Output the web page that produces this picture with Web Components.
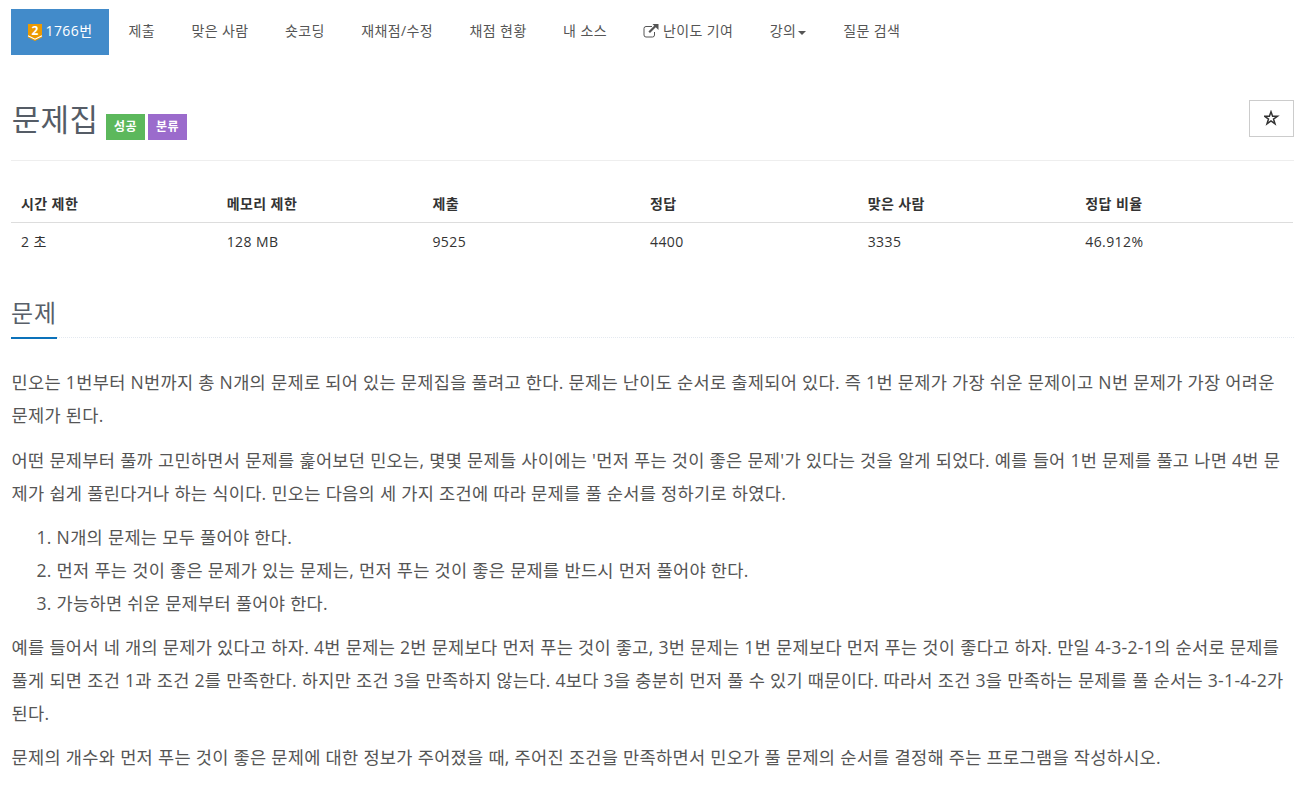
<!DOCTYPE html>
<html lang="ko">
<head>
<meta charset="utf-8">
<title>1766번: 문제집</title>
<style>
  body {
    margin: 0;
    padding: 9px 14px 0 11px;
    background: #fff;
    color: #333;
    font: 14px/20px "Open Sans", "Noto Sans CJK KR", sans-serif;
    letter-spacing: 0.4px;
  }
</style>
</head>
<body>
<problem-nav>
  <nav-item active><tier-badge level="2"></tier-badge> 1766번</nav-item>
  <nav-item>제출</nav-item>
  <nav-item>맞은 사람</nav-item>
  <nav-item>숏코딩</nav-item>
  <nav-item>재채점/수정</nav-item>
  <nav-item>채점 현황</nav-item>
  <nav-item>내 소스</nav-item>
  <nav-item><external-icon></external-icon> 난이도 기여</nav-item>
  <nav-item dropdown>강의</nav-item>
  <nav-item>질문 검색</nav-item>
</problem-nav>

<problem-header>
  문제집
  <problem-label slot="labels" kind="success">성공</problem-label>
  <problem-label slot="labels" kind="category">분류</problem-label>
</problem-header>

<problem-info></problem-info>

<problem-section heading="문제">
  <problem-text>민오는 1번부터 N번까지 총 N개의 문제로 되어 있는 문제집을 풀려고 한다. 문제는 난이도 순서로 출제되어 있다. 즉 1번 문제가 가장 쉬운 문제이고 N번 문제가 가장 어려운<br>문제가 된다.</problem-text>
  <problem-text>어떤 문제부터 풀까 고민하면서 문제를 훑어보던 민오는, 몇몇 문제들 사이에는 '먼저 푸는 것이 좋은 문제'가 있다는 것을 알게 되었다. 예를 들어 1번 문제를 풀고 나면 4번 문<br>제가 쉽게 풀린다거나 하는 식이다. 민오는 다음의 세 가지 조건에 따라 문제를 풀 순서를 정하기로 하였다.</problem-text>
  <condition-list></condition-list>
  <problem-text>예를 들어서 네 개의 문제가 있다고 하자. 4번 문제는 2번 문제보다 먼저 푸는 것이 좋고, 3번 문제는 1번 문제보다 먼저 푸는 것이 좋다고 하자. 만일 4-3-2-1의 순서로 문제를<br>풀게 되면 조건 1과 조건 2를 만족한다. 하지만 조건 3을 만족하지 않는다. 4보다 3을 충분히 먼저 풀 수 있기 때문이다. 따라서 조건 3을 만족하는 문제를 풀 순서는 3-1-4-2가<br>된다.</problem-text>
  <problem-text>문제의 개수와 먼저 푸는 것이 좋은 문제에 대한 정보가 주어졌을 때, 주어진 조건을 만족하면서 민오가 풀 문제의 순서를 결정해 주는 프로그램을 작성하시오.</problem-text>
</problem-section>

<script>
function define(name, html, setup) {
  customElements.define(name, class extends HTMLElement {
    constructor() {
      super();
      this.attachShadow({ mode: "open" }).innerHTML = html;
    }
    connectedCallback() {
      if (setup) setup(this, this.shadowRoot);
    }
  });
}

define("problem-nav", `
  <style>
    :host { display: flex; gap: 2.4px; height: 46px; }
  </style>
  <slot></slot>
`);

define("nav-item", `
  <style>
    :host {
      display: flex;
      align-items: center;
      box-sizing: border-box;
      height: 46px;
      padding: 0 17px 2px;
      color: #555;
      white-space: nowrap;
    }
    :host([active]) { padding-right: 16.6px; background: #428bca; color: #fff; }
    .caret {
      display: none;
      margin: 4px 1px 0 1.5px;
      border-top: 4px solid;
      border-left: 4.5px solid transparent;
      border-right: 4.5px solid transparent;
    }
    :host([dropdown]) .caret { display: block; }
  </style>
  <span><slot></slot></span><i class="caret"></i>
`);

define("tier-badge", `
  <style>
    :host { display: inline-block; width: 14px; height: 17px; margin-right: -0.5px; vertical-align: -5px; letter-spacing: 0; }
    svg { display: block; overflow: visible; }
    text { font: bold 12px "Open Sans", sans-serif; fill: #fff; text-anchor: middle; }
  </style>
  <svg width="14" height="17" viewBox="0 0 14 17">
    <path d="M0 0h14v13.5L7 17 0 13.5z" fill="#ec9a00"/>
    <path d="M0 11.8l7 3.4 7-3.4" fill="none" stroke="#fff" stroke-width="1.2"/>
    <text x="7" y="11"></text>
  </svg>
`, (el, root) => {
  root.querySelector("text").textContent = el.getAttribute("level");
});

define("external-icon", `
  <style>
    :host { display: inline-block; width: 16px; height: 14px; vertical-align: -2px; margin-right: -0.5px; }
    svg { display: block; }
  </style>
  <svg width="16" height="14" viewBox="0 0 16 14" fill="none" stroke="#555">
    <path d="M9 2.5H3Q1 2.5 1 4.5v6.5q0 2 2 2h6.5q2 0 2-2V8"/>
    <path d="M6.2 8.3L13 1.5" stroke-width="2.2"/>
    <path d="M9.5 0h6v6z" fill="#555" stroke="none"/>
  </svg>
`);

define("problem-header", `
  <style>
    :host {
      display: flex;
      justify-content: space-between;
      margin-top: 45px;
      height: 60px;
      border-bottom: 1px solid #eee;
    }
    .title { display: flex; align-items: flex-start; }
    h1 {
      margin: -1px 7.3px 0 0.7px;
      color: #555c66;
      font-size: 31px;
      font-weight: 400;
      line-height: 40px;
      letter-spacing: 0.33px;
      white-space: nowrap;
    }
    .labels { display: flex; gap: 3px; margin-top: 14px; }
    button {
      width: 45px;
      height: 37px;
      padding: 0;
      border: 1px solid #ccc;
      background: #fff;
    }
    svg { display: block; margin: -1px auto 0; }
  </style>
  <div class="title">
    <h1><slot></slot></h1>
    <div class="labels"><slot name="labels"></slot></div>
  </div>
  <button>
    <svg width="16" height="16" viewBox="0 0 16 16">
      <path d="M7 1.8l1.6 4.5h4.8l-3.9 2.8 1.5 4.7L7 11l-4 2.8 1.5-4.7L.6 6.3h4.8z" fill="none" stroke="#333" stroke-width="1.5"/>
    </svg>
  </button>
`);

define("problem-label", `
  <style>
    :host {
      display: block;
      box-sizing: border-box;
      width: 39px;
      height: 26px;
      padding-left: 1px;
      color: #fff;
      font-size: 12px;
      font-weight: 700;
      line-height: 26px;
      text-align: center;
    }
    :host([kind="success"]) { background: #5cb85c; }
    :host([kind="category"]) { background: #9b6bcc; }
  </style>
  <slot></slot>
`);

define("problem-info", `
  <style>
    :host { display: block; margin-top: 23px; }
    table { width: 1282px; border-collapse: collapse; table-layout: fixed; }
    th, td { box-sizing: border-box; height: 39px; padding: 0 10px; text-align: left; }
    th { width: 16.98%; height: 38.5px; padding-top: 1px; border-bottom: 1px solid #ddd; font-weight: 700; }
    th:nth-child(-n+2) { width: 16.05%; }
  </style>
  <table>
    <tr><th>시간 제한</th><th>메모리 제한</th><th>제출</th><th>정답</th><th>맞은 사람</th><th>정답 비율</th></tr>
    <tr><td>2 초</td><td>128 MB</td><td>9525</td><td>4400</td><td>3335</td><td>46.912%</td></tr>
  </table>
`);

define("problem-section", `
  <style>
    :host { display: block; margin-top: 35px; }
    .headline { height: 40px; border-bottom: 1px dotted #e4e9f0; }
    h2 {
      display: inline-block;
      box-sizing: border-box;
      height: 42px;
      margin: 0;
      border-bottom: 2px solid #0c72ba;
      color: #585f69;
      font-size: 24px;
      font-weight: 400;
      line-height: 31px;
      letter-spacing: 0.9px;
    }
    .body {
      display: flex;
      flex-direction: column;
      gap: 11.25px;
      margin-top: 28.8px;
      padding-left: 0.6px;
      color: #555;
      font-size: 17.6px;
      line-height: 33px;
      letter-spacing: 0.285px;
    }
  </style>
  <div class="headline"><h2></h2></div>
  <div class="body"><slot></slot></div>
`, (el, root) => {
  root.querySelector("h2").textContent = el.getAttribute("heading");
});

define("problem-text", `
  <style>
    :host { display: block; white-space: nowrap; }
  </style>
  <slot></slot>
`);

define("condition-list", `
  <style>
    :host { display: block; }
    ol { margin: 0; padding-left: 45px; }
  </style>
  <ol>
    <li>N개의 문제는 모두 풀어야 한다.</li>
    <li>먼저 푸는 것이 좋은 문제가 있는 문제는, 먼저 푸는 것이 좋은 문제를 반드시 먼저 풀어야 한다.</li>
    <li>가능하면 쉬운 문제부터 풀어야 한다.</li>
  </ol>
`);
</script>
</body>
</html>
